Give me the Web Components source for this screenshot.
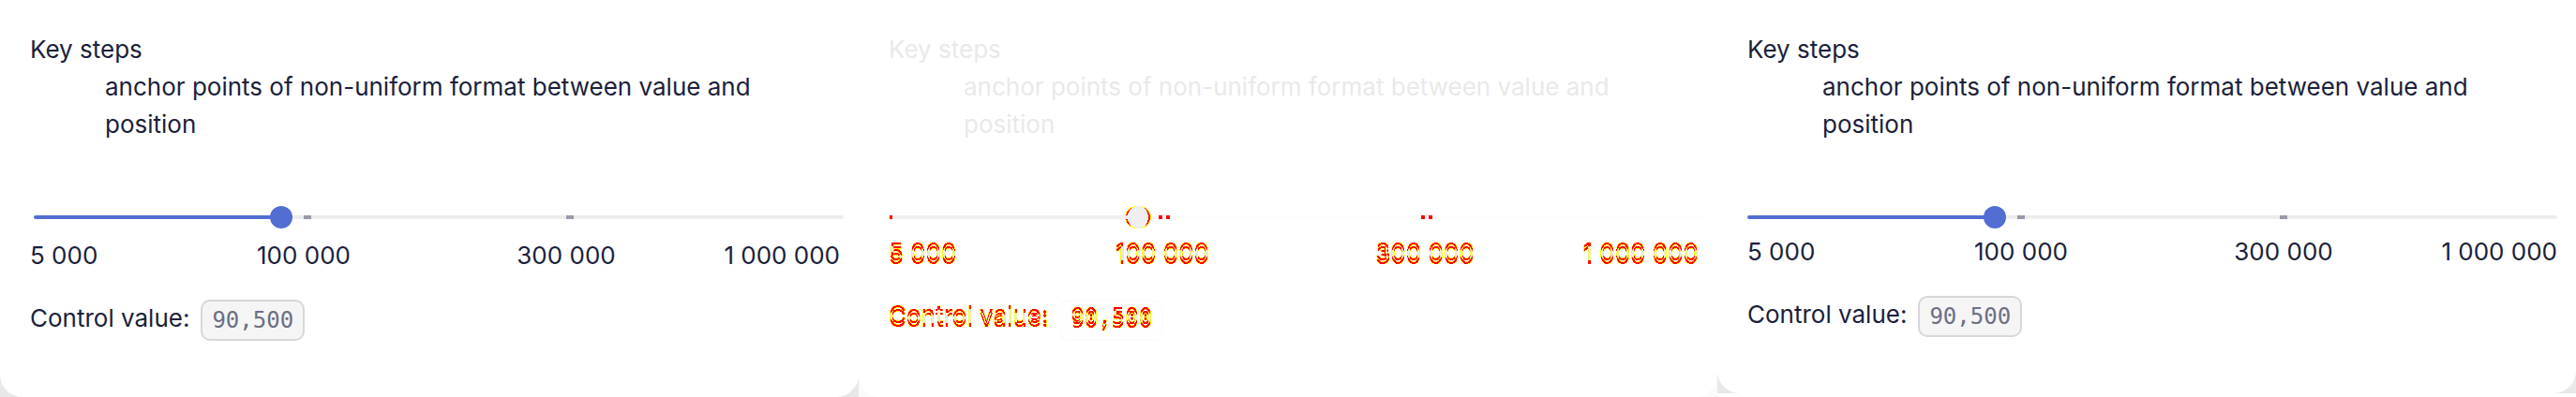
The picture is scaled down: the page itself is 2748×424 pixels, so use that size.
<!DOCTYPE html>
<html lang="en">
<head>
<meta charset="utf-8">
<title>Slider: key steps</title>
<style>
body { margin: 0; background: #fff; }
</style>
</head>
<body>
<diff-board>
  <slider-card></slider-card>
  <slider-card mode="diff"></slider-card>
  <slider-card mode="compact"></slider-card>
</diff-board>
<script>
customElements.define('diff-board', class extends HTMLElement {
  constructor() {
    super();
    this.attachShadow({ mode: 'open' }).innerHTML = `
      <style>
        :host { display: grid; grid-template-columns: repeat(3, minmax(0, 1fr)); align-items: start; }
      </style>
      <slot></slot>`;
  }
});

customElements.define('key-range', class extends HTMLElement {
  constructor() {
    super();
    this.attachShadow({ mode: 'open' }).innerHTML = `
      <style>
        :host { display: block; padding: 0 16px 0 36px; }
        :host([mode=compact]) { padding: 0 20px 0 32px; }
        :host([mode=diff]) { padding: 0 16px 0 32px; }
        input {
          -webkit-appearance: none; appearance: none; display: block;
          width: 100%; height: 24px; margin: 0; outline: none; background: none;
        }
        input::-webkit-slider-runnable-track {
          height: 4px; border-radius: 2px;
          --p1: calc(12px + (100% - 24px) / 3);
          --p2: calc(12px + (100% - 24px) * 2 / 3);
          background: linear-gradient(to right,
            #526ed3 0 30%, #ededed 30% calc(var(--p1) - 4px),
            #989aa9 calc(var(--p1) - 4px) calc(var(--p1) + 4px),
            #ededed calc(var(--p1) + 4px) calc(var(--p2) - 4px),
            #989aa9 calc(var(--p2) - 4px) calc(var(--p2) + 4px),
            #ededed calc(var(--p2) + 4px));
        }
        input::-webkit-slider-thumb {
          -webkit-appearance: none; width: 24px; height: 24px; margin-top: -10px;
          border: 0; border-radius: 50%; background: #526ed3;
        }
        :host([mode=diff]) input::-webkit-slider-runnable-track {
          --p1: calc(14px + (100% - 28px) / 3);
          --p2: calc(14px + (100% - 28px) * 2 / 3);
          background: linear-gradient(to right,
            #ff0 0 1px, #f00 1px 4px, #efefef 4px 30%, #fdfdfd 30% calc(var(--p1) - 6px),
            #f00 calc(var(--p1) - 6px) calc(var(--p1) - 2px),
            #fdfdfd calc(var(--p1) - 2px) calc(var(--p1) + 2px),
            #f00 calc(var(--p1) + 2px) calc(var(--p1) + 6px),
            #fdfdfd calc(var(--p1) + 6px) calc(var(--p2) - 6px),
            #f00 calc(var(--p2) - 6px) calc(var(--p2) - 2px),
            #fdfdfd calc(var(--p2) - 2px) calc(var(--p2) + 2px),
            #f00 calc(var(--p2) + 2px) calc(var(--p2) + 6px),
            #fdfdfd calc(var(--p2) + 6px));
        }
        :host([mode=diff]) input::-webkit-slider-thumb {
          width: 28px; border-radius: 0;
          background: url("data:image/svg+xml,%3Csvg xmlns='http://www.w3.org/2000/svg' width='28' height='24' shape-rendering='crispEdges'%3E%3Cpath d='M12 0a12 12 0 0 0 0 24h4a12 12 0 0 0 0-24z' fill='%23ff0'/%3E%3Cpath d='M12 1a11 11 0 0 0 0 22h4a11 11 0 0 0 0-22z' fill='%23f00'/%3E%3Cellipse cx='14' cy='12' rx='11' ry='12' fill='%23efefef'/%3E%3Cpath d='M0 10h5v4H0z' fill='%23efefef'/%3E%3C/svg%3E") no-repeat;
        }
      </style>
      <input type="range" min="0" max="100" value="30" aria-label="Amount">`;
  }
});

customElements.define('slider-card', class extends HTMLElement {
  constructor() {
    super();
    const mode = this.getAttribute('mode') || '';
    this.attachShadow({ mode: 'open' }).innerHTML = `
      <style>
        :host {
          display: block; color: #1b1f3b; font: 26px/40px Inter, sans-serif;
          background: linear-gradient(#fff 50%, #e8e8e8);
          --gap: 9px; --edge: #d7d7d7; --fill: #f5f5f5; --code: #6c6f83;
        }
        :host([mode=compact]) { --gap: 5px; }
        :host([mode=diff]) {
          color: #e9e9e9; background: #fbfbfb;
          --edge: #fbfbfb; --fill: #fefefe; --code: #e9e9e9;
        }
        section { padding: 33px 0 60px; border-radius: 0 0 24px 24px; background: #fff; }
        dl { margin: 0 32px 67px; }
        dd { margin: 0 0 0 80px; }
        ul {
          display: grid; grid-template-columns: 152fr 280fr 280fr 152fr;
          list-style: none; margin: var(--gap) 20px 27px 32px; padding: 0;
          text-align: center; white-space: nowrap;
        }
        li:first-child { text-align: left; }
        li:last-child { justify-self: end; }
        p { display: flex; align-items: flex-start; gap: 12px; margin: 0 32px; }
        output {
          box-sizing: border-box; height: 44px; padding: 0 10px; border: 2px solid var(--edge);
          border-radius: 10px; background: var(--fill); color: var(--code);
          font: 24px/40px "DejaVu Sans Mono", monospace;
        }
        svg { display: block; width: 0; height: 0; }
        :host([mode=diff]) :is(li, label, output span) { filter: url(#shift); }
        output span { display: block; }
      </style>
      <section>
        <dl><dt>Key steps</dt><dd>anchor points of non-uniform format between value and position</dd></dl>
        <key-range mode="${mode}"></key-range>
        <ul><li>5 000</li><li>100 000</li><li>300 000</li><li>1 000 000</li></ul>
        <p><label for="value">Control value:</label><output id="value"><span>90,500</span></output></p>
      </section>
      <svg aria-hidden="true">
        <!-- marks the pixels that change when a text moves up by 4px -->
        <filter id="shift" x="-10%" y="-20%" width="120%" height="140%" color-interpolation-filters="sRGB">
          <feOffset in="SourceAlpha" dy="-4" result="up"/>
          <feComposite in="SourceAlpha" in2="up" operator="xor" result="changed"/>
          <feComponentTransfer in="changed" result="soft"><feFuncA type="linear" slope="20" intercept="-1"/></feComponentTransfer>
          <feComponentTransfer in="changed" result="hard"><feFuncA type="linear" slope="20" intercept="-12"/></feComponentTransfer>
          <feFlood flood-color="#ff0"/><feComposite in2="soft" operator="in" result="yellow"/>
          <feFlood flood-color="#f00"/><feComposite in2="hard" operator="in" result="red"/>
          <feFlood flood-color="#e9e9e9"/><feComposite in2="SourceAlpha" operator="in"/>
          <feComposite in2="up" operator="in" result="same"/>
          <feMerge><feMergeNode in="yellow"/><feMergeNode in="red"/><feMergeNode in="same"/></feMerge>
        </filter>
      </svg>`;
  }
});
</script>
</body>
</html>
